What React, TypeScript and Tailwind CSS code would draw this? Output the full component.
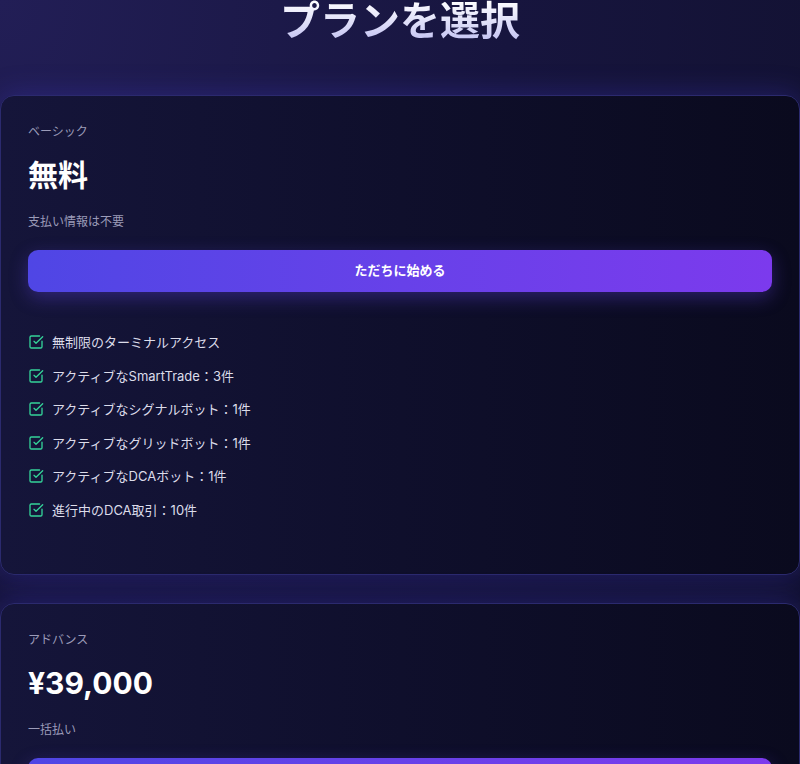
import { SquareCheckBig } from 'lucide-react';

const font = {
  fontFamily: 'Inter, "Noto Sans CJK JP", "Noto Sans", sans-serif',
};

interface Plan {
  name: string;
  price: string;
  note: string;
  cta: string;
  features: string[];
}

const plans: Plan[] = [
  {
    name: 'ベーシック',
    price: '無料',
    note: '支払い情報は不要',
    cta: 'ただちに始める',
    features: [
      '無制限のターミナルアクセス',
      'アクティブなSmartTrade：3件',
      'アクティブなシグナルボット：1件',
      'アクティブなグリッドボット：1件',
      'アクティブなDCAボット：1件',
      '進行中のDCA取引：10件',
    ],
  },
  {
    name: 'アドバンス',
    price: '¥39,000',
    note: '一括払い',
    cta: '購入する',
    features: [
      '無制限のターミナルアクセス',
      'アクティブなSmartTrade：無制限',
    ],
  },
];

function PlanCard({ plan }: { plan: Plan }) {
  return (
    <div className="rounded-[14px] border border-[#2b2a6e] bg-gradient-to-r from-[#15153a] via-[#0f0f2c] to-[#0a0a1e] px-[27px] pt-[27px] pb-[54px] shadow-[0_0_28px_rgba(67,56,202,0.35)]">
      {/* Plan name */}
      <p className="text-[12px] leading-[18px] text-[#9b9bb8]">{plan.name}</p>

      {/* Price */}
      <p className="mt-[16px] text-[30px] font-bold leading-[36px] text-white">
        {plan.price}
      </p>

      {/* Note */}
      <p className="mt-[20px] text-[12px] leading-[18px] text-[#9b9bb8]">{plan.note}</p>

      {/* CTA */}
      <button
        type="button"
        className="mt-[19px] flex h-[42px] w-full items-center justify-center rounded-[10px] bg-gradient-to-r from-[#4f46e5] to-[#7c3aed] text-[13px] font-bold text-white shadow-[0_6px_18px_rgba(99,70,235,0.35)]"
      >
        {plan.cta}
      </button>

      {/* Features */}
      <ul className="mt-[40px] flex flex-col gap-[13.6px]">
        {plan.features.map((f) => (
          <li key={f} className="flex items-center gap-2 text-[13px] leading-[20px] text-[#dcdcea]">
            <SquareCheckBig className="h-4 w-4 shrink-0 text-[#34d399]" strokeWidth={2} />
            <span>{f}</span>
          </li>
        ))}
      </ul>
    </div>
  );
}

export default function App() {
  return (
    <div
      style={font}
      className="min-h-screen overflow-hidden bg-[radial-gradient(ellipse_at_top_left,#221e56_0%,#17153e_45%,#0f0f2a_100%)]"
    >
      <h1 className="bg-gradient-to-b from-white to-[#c3c2f2] bg-clip-text pt-0 text-center text-[40px] font-bold leading-[42px] text-transparent">
        プランを選択
      </h1>

      <div className="mt-[53px] flex flex-col gap-7">
        {plans.map((p) => (
          <PlanCard key={p.name} plan={p} />
        ))}
      </div>
    </div>
  );
}
